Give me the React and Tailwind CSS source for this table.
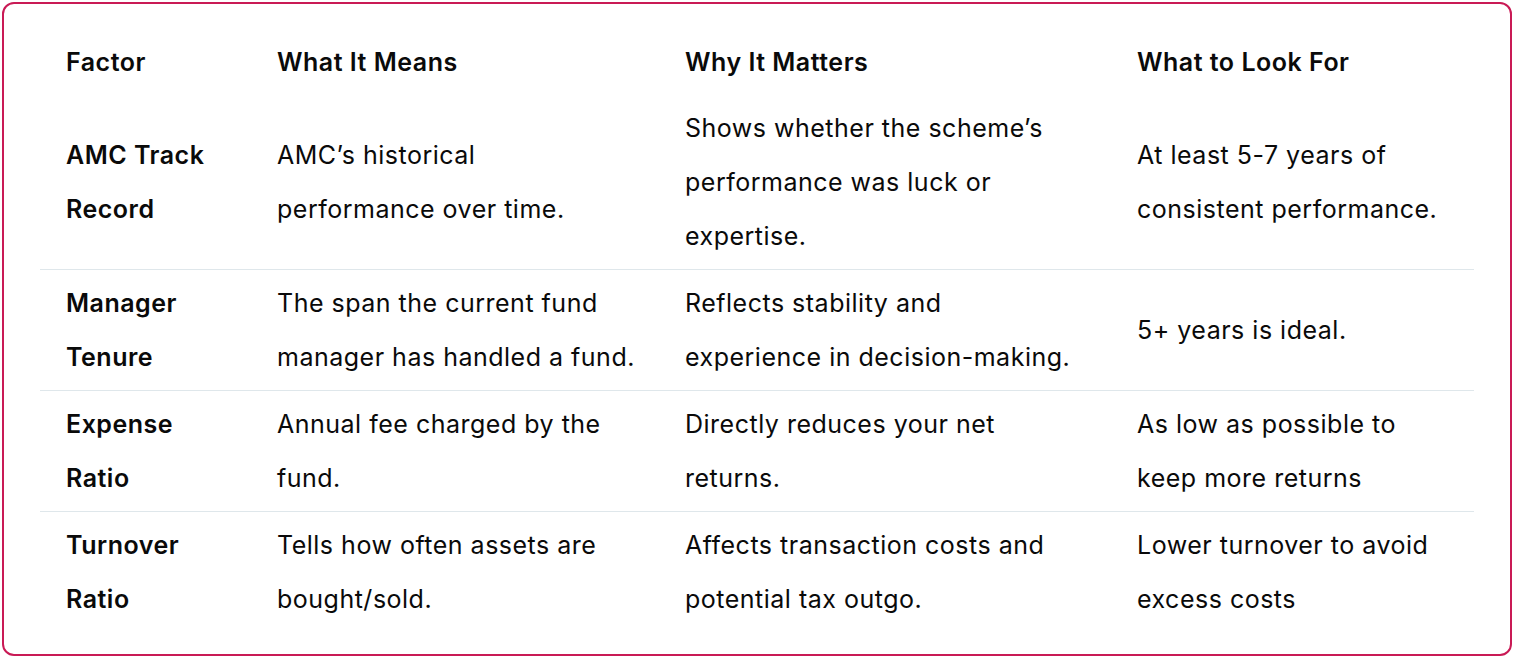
const rows = [
  {
    factor: ['AMC Track', 'Record'],
    means: ['AMC’s historical', 'performance over time.'],
    matters: ['Shows whether the scheme’s', 'performance was luck or', 'expertise.'],
    look: ['At least 5-7 years of', 'consistent performance.'],
  },
  {
    factor: ['Manager', 'Tenure'],
    means: ['The span the current fund', 'manager has handled a fund.'],
    matters: ['Reflects stability and', 'experience in decision-making.'],
    look: ['5+ years is ideal.'],
  },
  {
    factor: ['Expense', 'Ratio'],
    means: ['Annual fee charged by the', 'fund.'],
    matters: ['Directly reduces your net', 'returns.'],
    look: ['As low as possible to', 'keep more returns'],
  },
  {
    factor: ['Turnover', 'Ratio'],
    means: ['Tells how often assets are', 'bought/sold.'],
    matters: ['Affects transaction costs and', 'potential tax outgo.'],
    look: ['Lower turnover to avoid', 'excess costs'],
  },
];

// lines are broken by hand so the wrap matches the original
function Lines({ lines }) {
  return lines.map((l, i) => (
    <span key={i} className="block whitespace-nowrap">{l}</span>
  ));
}

export default function App() {
  return (
    <div className="bg-white p-[2px]" style={{ fontFamily: 'Inter, "Noto Sans", sans-serif' }}>
      <div className="rounded-xl border-2 border-[#c91a55] px-[36px] pt-[25px] pb-[22px]">
        <table className="w-full border-collapse text-[25px] leading-[54px] tracking-[0.02em] text-[#0a0a0a]">
          <colgroup>
            <col className="w-[211px]" />
            <col className="w-[408px]" />
            <col className="w-[452px]" />
            <col />
          </colgroup>
          <thead>
            <tr>
              <th className="py-[6px] pl-[26px] text-left font-semibold">Factor</th>
              <th className="py-[6px] pl-[26px] text-left font-semibold">What It Means</th>
              <th className="py-[6px] pl-[26px] text-left font-semibold">Why It Matters</th>
              <th className="py-[6px] pl-[26px] text-left font-semibold">What to Look For</th>
            </tr>
          </thead>
          <tbody>
            {rows.map((r, i) => (
              <tr key={i} className={i < rows.length - 1 ? 'border-b border-[#dfe7eb]' : ''}>
                <td className="py-[6px] pl-[26px] align-middle font-semibold"><Lines lines={r.factor} /></td>
                <td className="py-[6px] pl-[26px] align-middle"><Lines lines={r.means} /></td>
                <td className="py-[6px] pl-[26px] align-middle"><Lines lines={r.matters} /></td>
                <td className="py-[6px] pl-[26px] align-middle"><Lines lines={r.look} /></td>
              </tr>
            ))}
          </tbody>
        </table>
      </div>
    </div>
  );
}
